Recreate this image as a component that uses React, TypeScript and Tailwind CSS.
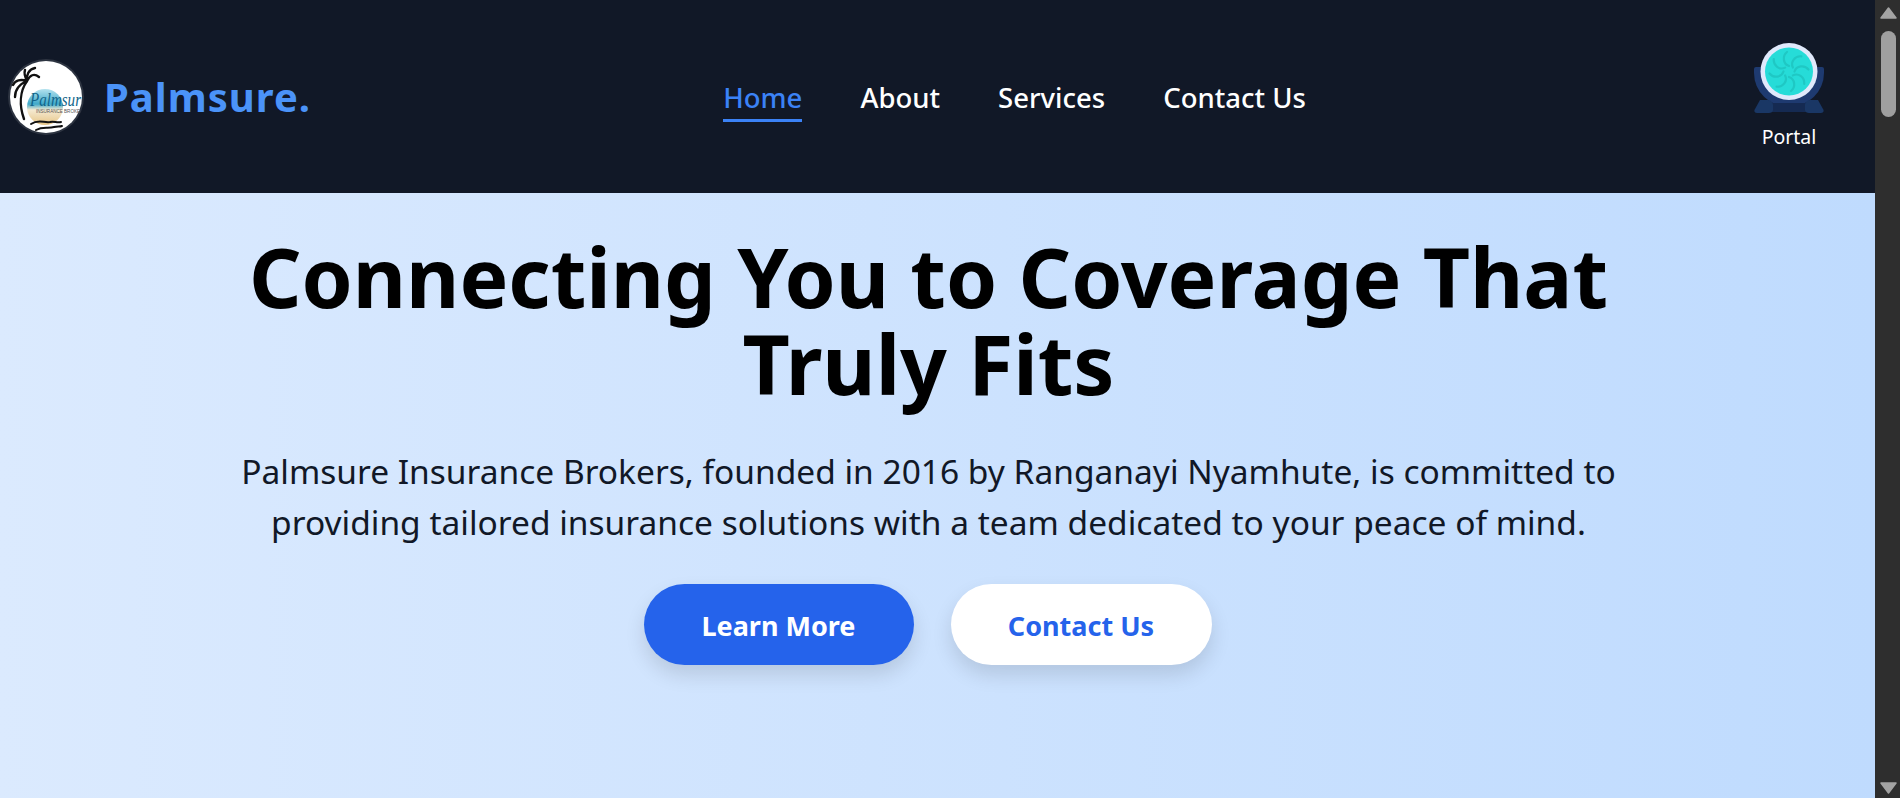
const font = { fontFamily: '"Noto Sans", sans-serif' };

const Logo = () => (
  <svg width="88" height="88" viewBox="0 0 88 88" className="shrink-0">
    <defs>
      <linearGradient id="beach" x1="0" y1="0" x2="0" y2="1">
        <stop offset="0" stopColor="#b4e2ee" />
        <stop offset="0.42" stopColor="#3fa9c9" />
        <stop offset="0.58" stopColor="#f5ead2" />
        <stop offset="1" stopColor="#e6c586" />
      </linearGradient>
    </defs>
    <circle cx="46" cy="44" r="38" fill="#fff" opacity="0.12" />
    <circle cx="46" cy="44" r="36" fill="#fff" />
    <circle cx="45" cy="54" r="18" fill="url(#beach)" />
    <text x="30" y="53" fontSize="19" fontStyle="italic" fontFamily="Liberation Serif" fill="#11658a" textLength="51" lengthAdjust="spacingAndGlyphs">Palmsur</text>
    <text x="36" y="60" fontSize="5.6" fontFamily="Liberation Sans" fill="#555" textLength="44" lengthAdjust="spacingAndGlyphs">INSURANCE BROKE</text>
    <g stroke="#111" fill="none" strokeLinecap="round">
      <path d="M27 28C20 38 19 52 24 66" strokeWidth="2.4" />
      <path d="M27 28C30 22 34 20 39 24M27 28C26 22 29 16 35 15M27 28C24 22 24 20 25 17M27 28C21 26 15 27 13 32M27 28C20 31 15 36 15 44" strokeWidth="2.4" />
      <path d="M31 71C38 66 44 70 50 69C54 68 57 70 61 69M36 77C43 73 48 76 54 74C57 73 60 74 62 73" strokeWidth="2" />
    </g>
  </svg>
);

const blades = [0, 45, 90, 135, 180, 225, 270, 315];

const PortalIcon = () => (
  <svg width="70" height="70" viewBox="0 0 70 70" className="shrink-0">
    <path d="M2 24h66a2 2 0 0 1 2 2v4a35 34 0 0 1-70 0v-4a2 2 0 0 1 2-2z" fill="#1e3a70" />
    <rect x="14" y="60" width="42" height="9" fill="#152a52" />
    <path d="M6 57h8c3 0 5 3 5 5v5c0 2-2 3-4 3H3c-3 0-3-3-2-4z" fill="#1a3765" />
    <path d="M64 57h-8c-3 0-5 3-5 5v5c0 2 2 3 4 3h12c3 0 3-3 2-4z" fill="#1a3765" />
    <circle cx="35" cy="28.5" r="28.5" fill="#e0e9fb" />
    <circle cx="35" cy="28.5" r="24" fill="#26dcd8" />
    <g fill="none" stroke="#1fc8c4" strokeWidth="2.2" strokeLinecap="round">
      {blades.map((deg) => (
        <path key={deg} d="M35 23C29 21 28 13 33 9" transform={`rotate(${deg} 35 28.5)`} />
      ))}
    </g>
  </svg>
);

const Triangle = ({ down }: { down?: boolean }) => (
  <svg width="17" height="12" viewBox="0 0 17 12" className={down ? "rotate-180" : ""}>
    <path d="M8.5 1L16 11H1z" fill="#a3a3a3" stroke="#a3a3a3" strokeWidth="1.5" strokeLinejoin="round" />
  </svg>
);

export default function App() {
  return (
    <div className="flex h-[798px] overflow-hidden" style={font}>
      <main className="flex-1 min-w-0 flex flex-col">
        <header className="h-[193px] bg-[#111827] flex items-center justify-between pr-[50px]">
          <div className="w-[306px] flex items-center gap-[16px]">
            <Logo />
            <span className="text-[40px] font-bold text-[#4b93f8] tracking-wide whitespace-nowrap">Palmsure.</span>
          </div>
          <nav className="flex items-center gap-[58px] text-[27.5px] font-medium text-white mt-[5px] mr-[30px]">
            <a className="text-[#3b82f6] border-b-[3px] border-[#3b82f6] -mb-[1px]">Home</a>
            <a className="pb-[3px]">About</a>
            <a className="pb-[3px]">Services</a>
            <a className="pb-[3px]">Contact Us</a>
          </nav>
          <div className="flex flex-col items-center gap-[10px] w-[72px]">
            <PortalIcon />
            <span className="text-[19.5px] text-white leading-7">Portal</span>
          </div>
        </header>
        <section className="flex-1 bg-gradient-to-r from-[#dbeafe] to-[#bfdbfe] flex flex-col items-center text-center pt-[40px] pr-[18px]">
          <h1 className="text-[82px] leading-[87px] font-bold text-black w-[1500px]">Connecting You to Coverage That Truly Fits</h1>
          <p className="text-[33.5px] leading-[51px] text-[#111827] mt-[39px] w-[1420px]">
            Palmsure Insurance Brokers, founded in 2016 by Ranganayi Nyamhute, is committed to providing tailored insurance solutions with a team dedicated to your peace of mind.
          </p>
          <div className="flex gap-[37px] mt-[36px] -ml-[2px]">
            <a className="w-[270px] h-[81px] pt-[4px] rounded-full bg-[#2563eb] text-white text-[27px] font-bold flex items-center justify-center shadow-[0_10px_20px_rgba(0,0,0,0.12)]">Learn More</a>
            <a className="w-[261px] h-[81px] pt-[4px] rounded-full bg-white text-[#2563eb] text-[27px] font-bold flex items-center justify-center shadow-[0_10px_20px_rgba(0,0,0,0.12)]">Contact Us</a>
          </div>
        </section>
      </main>
      <aside className="w-[25px] bg-[#2e2e2e] flex flex-col items-center justify-between pt-[7px] pb-[4px] pl-[2px]">
        <div className="flex flex-col items-center gap-[12px]">
          <Triangle />
          <div className="w-[15px] h-[86px] rounded-full bg-[#9f9f9f]" />
        </div>
        <Triangle down />
      </aside>
    </div>
  );
}
